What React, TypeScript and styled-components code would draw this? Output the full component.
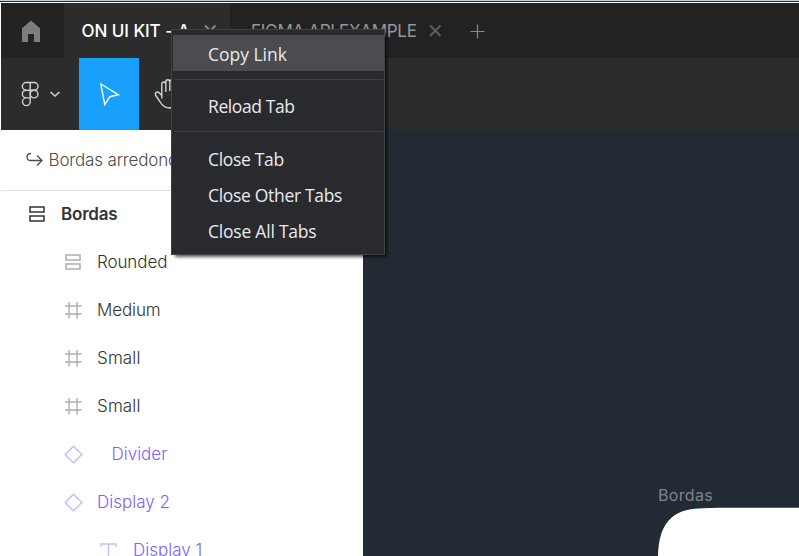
import React from 'react';
import styled, { createGlobalStyle } from 'styled-components';

const GlobalStyle = createGlobalStyle`
  * { box-sizing: border-box; }
  body { margin: 0; background: #fff; overflow: hidden; }
`;

const Window = styled.div`
  position: relative;
  display: flex;
  flex-direction: column;
  width: 799px;
  height: 556px;
  overflow: hidden;
  padding-left: 1px;
  font-family: Inter, 'Liberation Sans', sans-serif;
  font-size: 17px;
  background: #fff;
`;

const TopEdge = styled.div`
  flex: none;
  height: 3px;
  margin-left: -1px;
  border-top: 1px solid #bfcbdc;
  border-bottom: 1px solid #fff;
  background: #1f2c3c;
`;

const TabBar = styled.header`
  flex: none;
  display: flex;
  height: 55px;
  background: #222;
`;

const HomeTab = styled.div`
  width: 63px;
  display: flex;
  padding: 17px 0 0 20px;
`;

const Tab = styled.div<{ $active?: boolean; $width: number; $spacing: number }>`
  width: ${p => p.$width}px;
  padding-left: ${p => (p.$active ? 17.5 : 21)}px;
  display: flex;
  align-items: center;
  white-space: nowrap;
  letter-spacing: ${p => p.$spacing}px;
  word-spacing: ${p => (p.$active ? 0.4 : 0)}px;
  font-weight: ${p => (p.$active ? 500 : 400)};
  color: ${p => (p.$active ? '#fff' : '#979797')};
  background: ${p => (p.$active ? '#2c2c2c' : 'transparent')};
`;

const TabTitle = styled.span<{ $width: number }>`
  flex: none;
  width: ${p => p.$width}px;
`;

const NewTab = styled.div`
  display: flex;
  align-items: center;
  padding: 2px 0 0 21px;
`;

const Toolbar = styled.nav`
  flex: none;
  display: flex;
  height: 72px;
  background: #2c2c2c;
`;

const Tool = styled.div<{ $width: number; $selected?: boolean }>`
  width: ${p => p.$width}px;
  display: flex;
  background: ${p => (p.$selected ? '#18a0fb' : 'transparent')};
`;

const Workspace = styled.main`
  flex: 1;
  min-height: 0;
  display: flex;
`;

const Sidebar = styled.aside`
  flex: none;
  width: 362px;
  overflow: hidden;
  background: #fff;
`;

const SearchResult = styled.div`
  display: flex;
  align-items: center;
  gap: 4.5px;
  height: 61px;
  padding-left: 25px;
  border-bottom: 1px solid #e0e0e0;
  color: #4c4c4c;
  font-weight: 300;
  letter-spacing: -0.15px;
  white-space: nowrap;
`;

const Layer = styled.div<{ $indent: number; $tone: 'root' | 'frame' | 'component' }>`
  display: flex;
  align-items: center;
  height: 48px;
  padding-left: ${p => p.$indent}px;
  white-space: nowrap;
  font-weight: ${p => (p.$tone === 'root' ? 600 : 350)};
  color: ${p => (p.$tone === 'component' ? '#7b61ff' : '#333')};
  svg {
    flex: none;
    color: ${p => ({ root: '#333', frame: '#adadad', component: '#c6bbff' })[p.$tone]};
  }
`;

const Layers = styled.div`
  margin-top: -1px;
`;

const LayerName = styled.span<{ $gap: number; $spacing: number }>`
  margin-left: ${p => p.$gap}px;
  letter-spacing: ${p => p.$spacing}px;
`;

const Canvas = styled.section`
  flex: 1;
  padding: 355px 0 0 295px;
  background: #222b34;
  overflow: hidden;
`;

const FrameLabel = styled.div`
  height: 22px;
  line-height: 20px;
  font-size: 16px;
  letter-spacing: 0.35px;
  color: #7f858b;
`;

const Menu = styled.div`
  position: absolute;
  left: 171px;
  top: 29px;
  width: 214px;
  height: 226px;
  padding: 5px 0 5px 1px;
  background: #292a2d;
  border: 1px solid #3f4245;
  box-shadow: 3px 3px 3px -1px rgba(0, 0, 0, 0.65);
  font-family: 'Open Sans', 'Noto Sans', sans-serif;
  font-size: 17.5px;
  color: #e8eaed;
`;

const MenuItem = styled.div<{ $hover?: boolean; $spacing: number }>`
  height: 36px;
  line-height: ${p => (p.$hover ? 38 : 36)}px;
  padding-left: 35px;
  white-space: nowrap;
  letter-spacing: ${p => p.$spacing}px;
  background: ${p => (p.$hover ? '#4b4c4f' : 'transparent')};
`;

const Separator = styled.div<{ $top: number }>`
  height: 1px;
  margin: ${p => p.$top}px 1px ${p => 16 - p.$top}px;
  background: #3f4245;
`;

const HomeIcon = () => (
  <svg width="20" height="24" viewBox="0 0 20 24" fill="#7d7d7d">
    <path d="M10 .6 19 8.200V22h-6v-8H7v8H1V8.200z" />
  </svg>
);

const CloseIcon = ({ color = '#606060' }: { color?: string }) => (
  <svg width="13" height="13" viewBox="0 0 13 13" stroke={color} strokeWidth="1.8">
    <path d="m1 1.5 10.5 10.5M11.500 1.500 1 12" />
  </svg>
);

const FigmaIcon = () => (
  <svg width="64" height="72" fill="none" stroke="#d2d2d2" strokeWidth="1.4">
    <path d="M29.200 24.500h-4a3.850 3.850 0 0 0 0 7.700h4zM29.200 24.500h4a3.850 3.850 0 0 1 0 7.700h-4zM29.200 32.200h-4a3.850 3.850 0 0 0 0 7.700h4zM29.200 39.900h-4a3.850 3.850 0 1 0 4 3.850z" />
    <circle cx="33.100" cy="36.050" r="3.850" />
    <path d="m49.500 34 4.500 4 4.500-4" strokeWidth="1.600" />
  </svg>
);

const MoveIcon = () => (
  <svg width="60" height="72" fill="none" stroke="#fff" strokeWidth="1.400">
    <path d="m21.800 26 17.500 10.700-8.500 2-5 8z" />
  </svg>
);

const HandIcon = () => (
  <svg width="50" height="72" fill="none" stroke="#d2d2d2" strokeWidth="1.400" strokeLinejoin="round">
    <path d="M22.800 40.500V26.300c0-3 4-3 4 0V34M26.800 33V24c0-3 4-3 4 0v9M30.800 24c0-3 4-3 4 0v10M34.800 27c0-3 4-3 4 0v12c0 6-3 11-8 11-5.500 0-8-3-10-6.500l-4-6c-1.500-3 1.500-4.500 3.500-2.500l2.500 2.500" />
  </svg>
);

const ArrowIcon = () => (
  <svg width="18" height="16" fill="none" stroke="#4c4c4c" strokeWidth="1.300">
    <path d="M5 1.500C2 1.500 1 3 1 5s1.200 3.500 4 3.500h11M11 3.500l5 5-5 5" />
  </svg>
);

const icons = {
  stack: <path d="M2 3h14v5H2zM2 12h14v5H2z" strokeWidth="1.500" />,
  frame: <path d="M5 2v16.500M13 2v16.500M1 6h16.500M1 14h16.500" strokeWidth="1.400" />,
  diamond: <path d="m9.500 2.200 8.300 8.300-8.300 8.300-8.300-8.300z" strokeWidth="1.400" />,
  text: <path d="M2 7V4h15v3M9.500 4v15M6 19h7" strokeWidth="1.400" />,
};

const LayerIcon = ({ kind }: { kind: keyof typeof icons }) => (
  <svg width="19" height="21" viewBox="0 0 19 21" fill="none" stroke="currentColor">{icons[kind]}</svg>
);

const layers: {
  name: string; kind: keyof typeof icons; tone: 'root' | 'frame' | 'component';
  indent: number; gap: number; spacing: number;
}[] = [
  { name: 'Bordas', kind: 'stack', tone: 'root', indent: 27, gap: 14, spacing: -0.2 },
  { name: 'Rounded', kind: 'stack', tone: 'frame', indent: 63, gap: 14, spacing: -0.1 },
  { name: 'Medium', kind: 'frame', tone: 'frame', indent: 63, gap: 14, spacing: -0.1 },
  { name: 'Small', kind: 'frame', tone: 'frame', indent: 63, gap: 14, spacing: 0.15 },
  { name: 'Small', kind: 'frame', tone: 'frame', indent: 63, gap: 14, spacing: 0.15 },
  { name: 'Divider', kind: 'diamond', tone: 'component', indent: 63, gap: 28.5, spacing: 0 },
  { name: 'Display 2', kind: 'diamond', tone: 'component', indent: 63, gap: 14, spacing: 0 },
  { name: 'Display 1', kind: 'text', tone: 'component', indent: 98, gap: 15, spacing: 0 },
];

export default function App() {
  return (
    <Window>
      <GlobalStyle />
      <TopEdge />
      <TabBar>
        <HomeTab><HomeIcon /></HomeTab>
        <Tab $active $width={166} $spacing={-0.15}>
          <TabTitle $width={122.5}>ON UI KIT - A</TabTitle>
          <CloseIcon color="#8a8a8a" />
        </Tab>
        <Tab $width={219} $spacing={-0.3}>
          <TabTitle $width={178}>FIGMA API EXAMPLE</TabTitle>
          <CloseIcon />
        </Tab>
        <NewTab>
          <svg width="15" height="15" stroke="#8a8a8a" strokeWidth="1.200"><path d="M.5 7.500h14M7.500.5v14" /></svg>
        </NewTab>
      </TabBar>
      <Toolbar>
        <Tool $width={78}><FigmaIcon /></Tool>
        <Tool $width={60} $selected><MoveIcon /></Tool>
        <Tool $width={60}><HandIcon /></Tool>
      </Toolbar>
      <Workspace>
        <Sidebar>
          <SearchResult><ArrowIcon /><span>Bordas arredond</span></SearchResult>
          <Layers>
            {layers.map((l, i) => (
              <Layer key={i} $indent={l.indent} $tone={l.tone}>
                <LayerIcon kind={l.kind} />
                <LayerName $gap={l.gap} $spacing={l.spacing}>{l.name}</LayerName>
              </Layer>
            ))}
          </Layers>
        </Sidebar>
        <Canvas>
          <FrameLabel>Bordas</FrameLabel>
          <svg width="141" height="60" fill="#fff"><path d="M0 60V49C1 17 13 1.500 45 1.200L60 .7H141V60z" /></svg>
        </Canvas>
      </Workspace>
      <Menu>
        <MenuItem $hover $spacing={-0.02}>Copy Link</MenuItem>
        <Separator $top={8} />
        <MenuItem $spacing={-0.4}>Reload Tab</MenuItem>
        <Separator $top={7} />
        <MenuItem $spacing={-0.32}>Close Tab</MenuItem>
        <MenuItem $spacing={-0.32}>Close Other Tabs</MenuItem>
        <MenuItem $spacing={-0.22}>Close All Tabs</MenuItem>
      </Menu>
    </Window>
  );
}
